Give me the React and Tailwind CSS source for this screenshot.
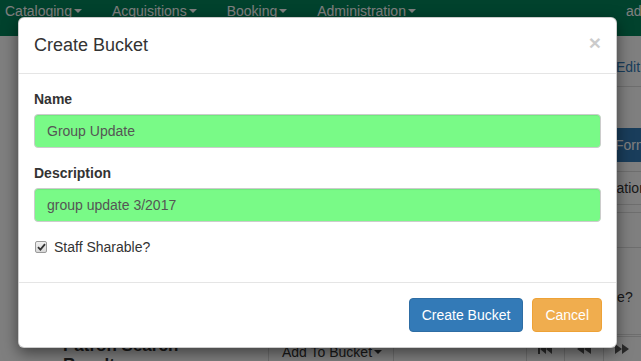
import React from "react";

function Caret() {
  return (
    <span className="inline-block ml-[2px] w-0 h-0 align-middle border-t-[4px] border-t-current border-x-[4px] border-x-transparent" />
  );
}

function NavLink({ children }) {
  return (
    <div className="px-[15px] py-[15px] leading-[20px] whitespace-nowrap flex items-center">
      <span>{children}</span>
      <Caret />
    </div>
  );
}

function Tri({ dir = "right" }) {
  return (
    <svg width="15" height="10" viewBox="0 0 15 10" className="fill-[#555]">
      {dir === "right" ? (
        <>
          <polygon points="0,0 7,5 0,10" />
          <polygon points="7,0 14,5 7,10" />
        </>
      ) : (
        <>
          <polygon points="7,0 0,5 7,10" />
          <polygon points="14,0 7,5 14,10" />
        </>
      )}
    </svg>
  );
}

export default function App() {
  return (
    <div className="relative w-[641px] h-[361px] overflow-hidden bg-white text-[14px] text-[#333] font-['Liberation_Sans',Arial,sans-serif]">
      {/* navbar */}
      <div className="h-[50px] mt-[-14px] bg-[#03845a] text-white flex items-start">
        <div className="flex ml-[-10px]">
          <NavLink>Cataloging</NavLink>
          <NavLink>Acquisitions</NavLink>
          <NavLink>Booking</NavLink>
          <NavLink>Administration</NavLink>
        </div>
        <div className="ml-[180px] px-[15px] py-[15px] leading-[20px] whitespace-nowrap">admin</div>
      </div>

      {/* page content */}
      <div className="flex flex-col">
        <div className="flex h-[300px]">
          <div className="flex-1" />
          <div className="w-[51px] flex flex-col whitespace-nowrap overflow-hidden">
            <div className="h-[51px] border-b border-[#ddd] pt-[21px] pl-[26px] leading-[20px] text-[#337ab7]">Edit</div>
            <div className="h-[41px]" />
            <div className="h-[34px] bg-[#337ab7] text-white pl-[25px] leading-[34px]">Format</div>
            <div className="h-[10px] border-b border-[#ddd]" />
            <div className="h-[33px] border-b border-[#ddd] pl-[4px] leading-[32px]">Location</div>
            <div className="h-[8px] border-b border-[#ddd]" />
            <div className="h-[35px] border-b border-[#ddd]" />
            <div className="h-[87px] border-b border-[#ddd] pt-[39px] pl-[24px] leading-[20px]">le?</div>
          </div>
        </div>
        <div className="flex h-[30px]">
          <div className="w-[268px] pl-[63px] text-[17px] font-bold leading-[19px] text-[#333]">
            Patron Search
            <br />
            Results
          </div>
          <div className="flex-1 flex border-t border-l border-[#ddd]">
            <div className="w-[125px] border-r border-[#ddd] pl-[13px] pt-[3px] leading-[20px] whitespace-nowrap flex items-center h-[26px]">
              Add To Bucket
              <Caret />
            </div>
            <div className="flex-1" />
            <div className="w-[38px] border-l border-[#ddd] flex justify-center pt-[7px]">
              <svg width="15" height="10" viewBox="0 0 15 10" className="fill-[#555]">
                <rect x="0" y="0" width="2" height="10" />
                <polygon points="8,0 2,5 8,10" />
                <polygon points="14,0 8,5 14,10" />
              </svg>
            </div>
            <div className="w-[39px] border-l border-[#ddd] flex justify-center pt-[7px]">
              <Tri dir="left" />
            </div>
            <div className="w-[38px] border-l border-[#ddd] flex justify-start pl-[11px] pt-[7px]">
              <Tri dir="right" />
            </div>
          </div>
        </div>
      </div>

      {/* backdrop */}
      <div className="absolute inset-0 bg-black/50" />

      {/* modal */}
      <div className="absolute left-[18px] top-[17px] w-[599px] bg-white border border-black/20 rounded-[6px] shadow-[0_5px_15px_rgba(0,0,0,0.5)]">
        <div className="p-[15px] border-b border-[#e5e5e5] flex items-start">
          <h4 className="text-[18px] leading-[25px] text-[#333]">Create Bucket</h4>
          <span className="ml-auto mt-[-1px] text-[21px] font-bold leading-[21px] text-black opacity-20">×</span>
        </div>
        <div className="p-[15px]">
          <div className="mb-[15px]">
            <label className="block font-bold mb-[5px] leading-[20px]">Name</label>
            <div className="h-[34px] px-[12px] border border-[#ccc] rounded-[4px] bg-[#79fa87] text-[#555] leading-[32px] shadow-[inset_0_1px_1px_rgba(0,0,0,0.075)]">
              Group Update
            </div>
          </div>
          <div className="mb-[15px]">
            <label className="block font-bold mb-[5px] leading-[20px]">Description</label>
            <div className="h-[34px] px-[12px] border border-[#ccc] rounded-[4px] bg-[#79fa87] text-[#555] leading-[32px] shadow-[inset_0_1px_1px_rgba(0,0,0,0.075)]">
              group update 3/2017
            </div>
          </div>
          <div className="h-[20px] mb-[10px] flex items-center">
            <span className="ml-[1px] w-[12px] h-[12px] rounded-[2px] border border-[#9a9a9a] bg-gradient-to-b from-[#f0f0f0] to-[#d8d8d8] flex items-center justify-center">
              <svg width="9" height="8" viewBox="0 0 9 8">
                <path d="M1 4.2 L3.4 6.6 L8 1.2" fill="none" stroke="#333" strokeWidth="1.8" />
              </svg>
            </span>
            <span className="ml-[7px] leading-[20px]">Staff Sharable?</span>
          </div>
        </div>
        <div className="p-[15px] border-t border-[#e5e5e5] flex justify-end gap-[9px]">
          <button className="h-[34px] px-[12px] rounded-[4px] bg-[#337ab7] border border-[#2e6da4] text-white leading-[20px]">
            Create Bucket
          </button>
          <button className="h-[34px] px-[12px] rounded-[4px] bg-[#f0ad4e] border border-[#eea236] text-white leading-[20px] mr-[-1px]">
            Cancel
          </button>
        </div>
      </div>
    </div>
  );
}
